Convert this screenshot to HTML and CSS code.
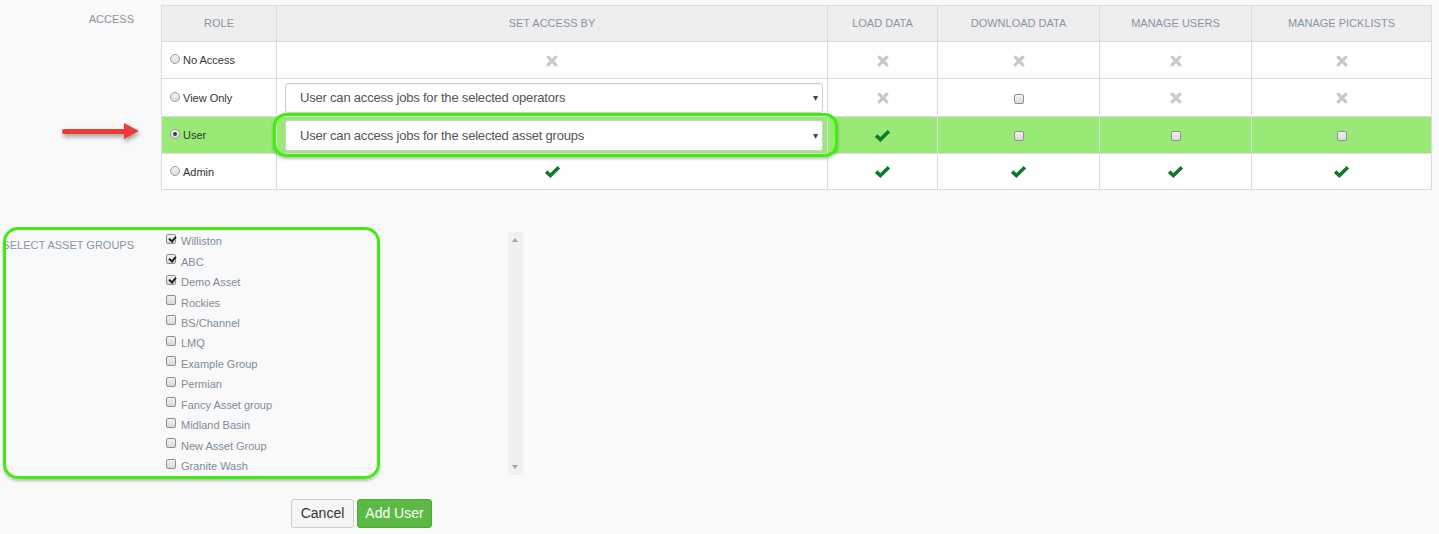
FILE: index.html
```html
<!DOCTYPE html>
<html>
<head>
<meta charset="utf-8">
<link rel="stylesheet" href="styles.css">
</head>
<body>
<div class="page">
  <div class="form-row access-row">
    <div class="field-label">ACCESS</div>
    <div class="table-wrap">
      <div class="red-arrow"><span class="shaft"></span><span class="head"></span></div>
      <table class="access">
        <colgroup>
          <col style="width:115px"><col style="width:551px"><col style="width:110px"><col style="width:162px"><col style="width:152px"><col style="width:180px">
        </colgroup>
        <thead>
          <tr><th>ROLE</th><th>SET ACCESS BY</th><th>LOAD DATA</th><th>DOWNLOAD DATA</th><th>MANAGE USERS</th><th>MANAGE PICKLISTS</th></tr>
        </thead>
        <tbody>
          <tr>
            <td class="role"><span class="radio"></span>No Access</td>
            <td class="c"><svg class="x" viewBox="0 0 12 12"><path d="M2.2 2.2L9.8 9.8M9.8 2.2L2.2 9.8"/></svg></td>
            <td class="c"><svg class="x" viewBox="0 0 12 12"><path d="M2.2 2.2L9.8 9.8M9.8 2.2L2.2 9.8"/></svg></td>
            <td class="c"><svg class="x" viewBox="0 0 12 12"><path d="M2.2 2.2L9.8 9.8M9.8 2.2L2.2 9.8"/></svg></td>
            <td class="c"><svg class="x" viewBox="0 0 12 12"><path d="M2.2 2.2L9.8 9.8M9.8 2.2L2.2 9.8"/></svg></td>
            <td class="c"><svg class="x" viewBox="0 0 12 12"><path d="M2.2 2.2L9.8 9.8M9.8 2.2L2.2 9.8"/></svg></td>
          </tr>
          <tr>
            <td class="role"><span class="radio"></span>View Only</td>
            <td class="sel-cell"><div class="select"><span>User can access jobs for the selected operators</span><span class="caret">&#9662;</span></div></td>
            <td class="c"><svg class="x" viewBox="0 0 12 12"><path d="M2.2 2.2L9.8 9.8M9.8 2.2L2.2 9.8"/></svg></td>
            <td class="c"><span class="tcb"></span></td>
            <td class="c"><svg class="x" viewBox="0 0 12 12"><path d="M2.2 2.2L9.8 9.8M9.8 2.2L2.2 9.8"/></svg></td>
            <td class="c"><svg class="x" viewBox="0 0 12 12"><path d="M2.2 2.2L9.8 9.8M9.8 2.2L2.2 9.8"/></svg></td>
          </tr>
          <tr class="active">
            <td class="role"><span class="radio on"></span>User</td>
            <td class="sel-cell"><div class="hl-box"></div><div class="select sel2"><span>User can access jobs for the selected asset groups</span><span class="caret">&#9662;</span></div></td>
            <td class="c"><svg class="ok" viewBox="0 0 16 12"><path d="M2 6.2L6 9.8L14 2"/></svg></td>
            <td class="c"><span class="tcb"></span></td>
            <td class="c"><span class="tcb"></span></td>
            <td class="c"><span class="tcb"></span></td>
          </tr>
          <tr>
            <td class="role"><span class="radio"></span>Admin</td>
            <td class="c"><svg class="ok" viewBox="0 0 16 12"><path d="M2 6.2L6 9.8L14 2"/></svg></td>
            <td class="c"><svg class="ok" viewBox="0 0 16 12"><path d="M2 6.2L6 9.8L14 2"/></svg></td>
            <td class="c"><svg class="ok" viewBox="0 0 16 12"><path d="M2 6.2L6 9.8L14 2"/></svg></td>
            <td class="c"><svg class="ok" viewBox="0 0 16 12"><path d="M2 6.2L6 9.8L14 2"/></svg></td>
            <td class="c"><svg class="ok" viewBox="0 0 16 12"><path d="M2 6.2L6 9.8L14 2"/></svg></td>
          </tr>
        </tbody>
      </table>
    </div>
  </div>

  <div class="form-row groups-row">
    <div class="hl-groups"></div>
    <div class="field-label groups-label">SELECT ASSET GROUPS</div>
    <div class="list-box">
      <ul class="groups">
        <li><span class="cb checked"></span>Williston</li>
        <li><span class="cb checked"></span>ABC</li>
        <li><span class="cb checked"></span>Demo Asset</li>
        <li><span class="cb"></span>Rockies</li>
        <li><span class="cb"></span>BS/Channel</li>
        <li><span class="cb"></span>LMQ</li>
        <li><span class="cb"></span>Example Group</li>
        <li><span class="cb"></span>Permian</li>
        <li><span class="cb"></span>Fancy Asset group</li>
        <li><span class="cb"></span>Midland Basin</li>
        <li><span class="cb"></span>New Asset Group</li>
        <li><span class="cb"></span>Granite Wash</li>
      </ul>
      <div class="scrollbar"><span class="up"></span><span class="down"></span></div>
    </div>
  </div>

  <div class="actions">
    <button class="btn cancel">Cancel</button>
    <button class="btn add">Add User</button>
  </div>
</div>
</body>
</html>
```

FILE: styles.css
```css
* { box-sizing: border-box; }
html, body { margin: 0; padding: 0; }
body {
  background: #f9f9f9;
  font-family: "Liberation Sans", Arial, sans-serif;
  color: #333;
  width: 1439px;
  height: 534px;
  overflow: hidden;
}
.page { padding-top: 5px; }
.form-row { display: flex; gap: 27px; position: relative; }
.field-label {
  width: 134px;
  flex: none;
  text-align: right;
  font-size: 11px;
  line-height: 13px;
  color: #8795a3;
  padding-top: 8px;
  white-space: nowrap;
}
.table-wrap { position: relative; }
.red-arrow {
  position: absolute;
  left: -99px;
  top: 118px;
  width: 77px;
  height: 16px;
  display: flex;
  align-items: center;
  filter: drop-shadow(1px 3px 2px rgba(0,0,0,0.35));
}
.red-arrow .shaft {
  width: 62px;
  height: 5px;
  background: #f03a3a;
  border-radius: 2px 0 0 2px;
}
.red-arrow .head {
  width: 0; height: 0;
  border-top: 8px solid transparent;
  border-bottom: 8px solid transparent;
  border-left: 15px solid #f03a3a;
}
table.access {
  border-collapse: collapse;
  table-layout: fixed;
  width: 1270px;
  background: #fff;
}
table.access th, table.access td {
  border: 1px solid #dcdcdc;
  padding: 0 8px;
}
table.access th {
  background: #eeeeef;
  height: 36px;
  font-size: 11px;
  font-weight: normal;
  color: #8795a3;
  text-align: center;
  padding-bottom: 2px;
}
table.access td { height: 37px; font-size: 11px; }
table.access tbody tr:nth-child(2) td { height: 38px; }
table.access tbody tr:nth-child(4) td { height: 36px; }
td.role { padding-left: 10px; padding-top: 5px; }
td.c { text-align: center; }
tr.active td { background: #99e977; }
.radio {
  display: inline-block;
  width: 10px; height: 10px;
  border-radius: 50%;
  border: 1px solid #9c9c9c;
  background: linear-gradient(#f4f4f4, #dcdcdc);
  margin-right: 3px;
  vertical-align: 0px;
  position: relative;
}
.radio.on::after {
  content: "";
  position: absolute;
  left: 2px; top: 2px;
  width: 4px; height: 4px;
  border-radius: 50%;
  background: #3a3a3a;
}
svg.x { width: 12px; height: 12px; vertical-align: middle; }
svg.x path { stroke: #c9c9c9; stroke-width: 3.2; stroke-linecap: round; fill: none; }
svg.ok { width: 17px; height: 13px; vertical-align: middle; }
svg.ok path { stroke: #0f7a2c; stroke-width: 3.4; stroke-linecap: butt; stroke-linejoin: miter; fill: none; }
.tcb {
  display: inline-block;
  width: 10px; height: 10px;
  border: 1px solid #8f8f8f;
  border-radius: 2px;
  background: linear-gradient(#f2f2f2, #dadada);
  vertical-align: middle;
}
td.sel-cell { position: relative; padding: 3px 0 3px 8px; }
.select {
  position: relative;
  width: 538px;
  height: 30px;
  background: #fff;
  border: 1px solid #cfcfcf;
  border-radius: 3px;
  display: flex;
  align-items: center;
  justify-content: space-between;
  padding: 0 4px 0 14px;
  font-size: 13px;
  letter-spacing: -0.2px;
  color: #555;
  box-shadow: inset 0 1px 1px rgba(0,0,0,0.06);
}
.select .caret { font-size: 10px; color: #444; }
.sel2 { height: 31px; }
.hl-box {
  position: absolute;
  left: -4px; right: -11px; top: -4px; bottom: -4px;
  border: 3px solid #3fee10;
  border-radius: 13px;
  box-shadow: 0 2px 3px rgba(0,0,0,0.25);
  pointer-events: none;
  z-index: 2;
}
.groups-row { margin-top: 42px; }
.groups-label { padding-top: 7px; }
.hl-groups {
  position: absolute;
  left: 3px; top: -5px;
  width: 377px; height: 252px;
  border: 3px solid #3fee10;
  border-radius: 15px;
  box-shadow: 0 2px 3px rgba(0,0,0,0.25);
  pointer-events: none;
}
.list-box {
  display: flex;
  width: 362px;
  height: 243px;
}
ul.groups {
  list-style: none;
  margin: 0;
  padding: 0 0 0 5px;
  flex: 1;
}
ul.groups li {
  height: 20.45px;
  display: flex;
  align-items: center;
  font-size: 11px;
  color: #7d8c9b;
  margin-top: -1px;
  margin-bottom: 1px;
}
.cb {
  width: 10px; height: 10px;
  border: 1px solid #8f8f8f;
  border-radius: 2px;
  background: linear-gradient(#f2f2f2, #d8d8d8);
  margin-right: 5px;
  margin-top: -5px;
  position: relative;
  flex: none;
}
.cb.checked::after {
  content: "";
  position: absolute;
  left: 2.5px; top: 0px;
  width: 3px; height: 5px;
  border-right: 2px solid #222;
  border-bottom: 2px solid #222;
  transform: rotate(40deg);
}
.scrollbar {
  width: 15px;
  background: #f0f0f0;
  position: relative;
  flex: none;
}
.scrollbar .up, .scrollbar .down {
  position: absolute;
  left: 4px;
  width: 0; height: 0;
  border-left: 3.5px solid transparent;
  border-right: 3.5px solid transparent;
}
.scrollbar .up { top: 6px; border-bottom: 4px solid #a3a3a3; }
.scrollbar .down { bottom: 6px; border-top: 4px solid #a3a3a3; }
.actions {
  margin-top: 24px;
  padding-left: 291px;
  display: flex;
  gap: 3px;
}
.btn {
  font-family: "Liberation Sans", Arial, sans-serif;
  font-size: 14px;
  height: 29px;
  border-radius: 3px;
  padding: 0 0 2px 0;
  cursor: pointer;
}
.btn.cancel {
  width: 63px;
  background: #f5f5f5;
  border: 1px solid #cccccc;
  color: #333;
}
.btn.add {
  width: 75px;
  background: #5cb945;
  border: 1px solid #4cab36;
  color: #fff;
}
```
